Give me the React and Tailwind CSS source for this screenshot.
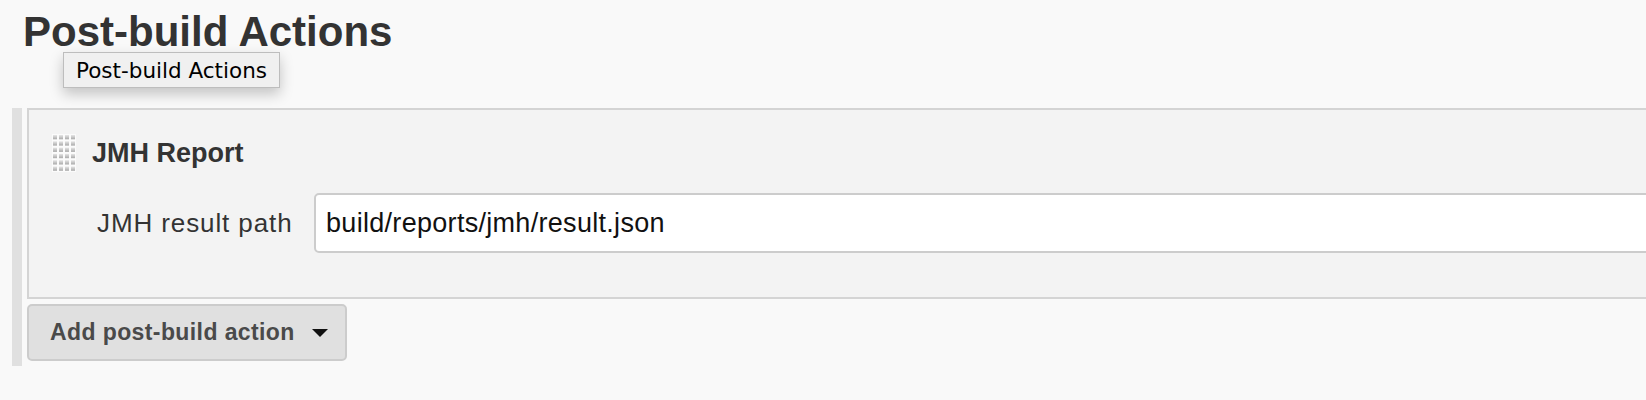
import React from 'react';

// little grip handle drawn as a 4x6 grid of soft dots
const DragHandle = () => {
  const dots = [];
  for (let r = 0; r < 6; r++) {
    for (let c = 0; c < 4; c++) {
      dots.push(<rect key={`${r}-${c}`} x={c * 6 + 1} y={r * 6.3 + 1} width="4" height="4.3" fill="url(#dot)" />);
    }
  }
  return (
    <svg width="24" height="38" viewBox="0 0 24 38" className="shrink-0">
      <defs>
        <linearGradient id="dot" x1="0" y1="0" x2="0" y2="1">
          <stop offset="0" stopColor="#e6e6e6" />
          <stop offset="1" stopColor="#a9a9a9" />
        </linearGradient>
      </defs>
      <rect width="24" height="38" fill="#fbfbfb" />
      {dots}
    </svg>
  );
};

const App = () => {
  return (
    <div className="relative w-full h-[400px] overflow-hidden bg-[#f9f9f9] font-['Liberation_Sans',Arial,sans-serif]">
      {/* Section title */}
      <h1 className="pt-[11px] pl-[23px] text-[42px] leading-[42px] font-bold text-[#333]">
        Post-build Actions
      </h1>

      {/* Tooltip over the title */}
      <div className="absolute left-[63px] top-[52px] h-[36px] flex items-center px-[12px] bg-[#f0f0f0] border border-[#bdbdbd] shadow-[0_6px_14px_rgba(0,0,0,0.22)] font-['DejaVu_Sans',sans-serif] text-[21.5px] leading-[21px] text-black">
        Post-build Actions
      </div>

      {/* Actions container */}
      <div className="mt-[55px] ml-[12px] w-[1720px] border-l-[10px] border-[#e0e0e0] pl-[5px] pb-[5px]">
        <div className="bg-[#f3f3f3] border-2 border-[#d4d4d4] pt-[24px] pb-[44px]">
          <div className="flex items-center pl-[23px] gap-[16px]">
            <DragHandle />
            <span className="text-[27px] leading-[27px] font-bold text-[#333]">JMH Report</span>
          </div>

          <div className="flex items-center mt-[21px] pl-[68px]">
            <label className="w-[217px] shrink-0 text-[26px] leading-[26px] tracking-[0.9px] text-[#333]">
              JMH result path
            </label>
            <input
              type="text"
              defaultValue="build/reports/jmh/result.json"
              className="flex-1 h-[60px] px-[10px] bg-white border-2 border-[#cccccc] rounded-[5px] text-[27px] tracking-[0.3px] text-[#111] outline-none font-['Liberation_Sans',Arial,sans-serif]"
            />
          </div>
        </div>

        <button className="mt-[5px] h-[57px] w-[320px] flex items-center pl-[21px] bg-[#e0e0e0] border-2 border-[#cccccc] rounded-[5px] text-[23px] tracking-[0.4px] font-bold text-[#4a4a4a]">
          Add post-build action
          <svg width="16" height="8" viewBox="0 0 16 8" className="ml-[17px]">
            <path d="M0 0h16L8 8z" fill="#111" />
          </svg>
        </button>
      </div>
    </div>
  );
};

export default App;
